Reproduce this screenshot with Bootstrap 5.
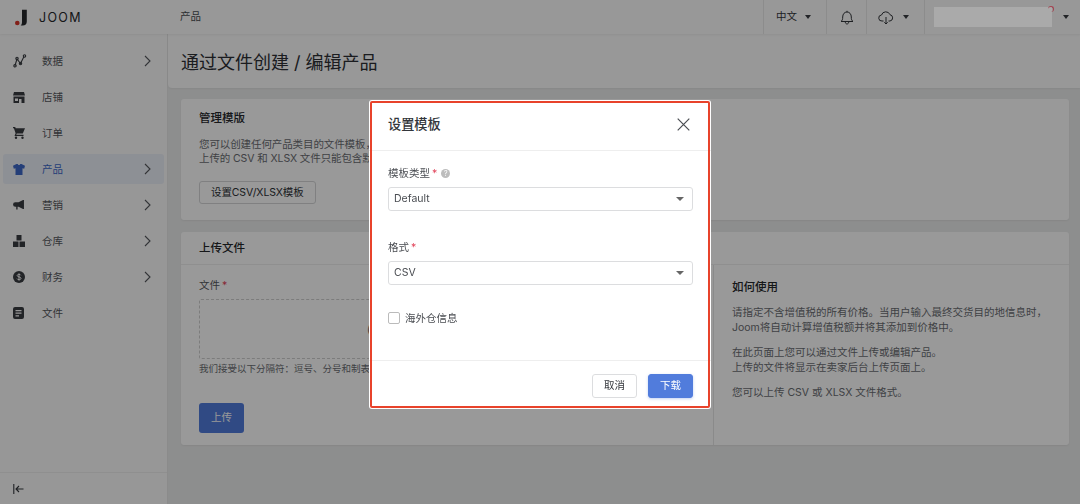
<!DOCTYPE html>
<html lang="zh">
<head>
<meta charset="utf-8">
<title>Joom</title>
<link href="https://cdn.jsdelivr.net/npm/bootstrap@5.3.0/dist/css/bootstrap.min.css" rel="stylesheet">
<style>
html,body{height:504px;overflow:hidden}
body{font-family:"Inter","Noto Sans CJK SC",sans-serif;font-size:10.5px;line-height:15px;color:#55585d;background:#eceded}
.shell{height:504px;overflow:hidden}
.topbar{height:34px;background:#fdfdfd;box-shadow:0 1px 2px rgba(0,0,0,.06);position:relative}
.brand{width:176px;padding-left:15px;gap:11px}
.brand-name{font-size:12.5px;font-weight:400;letter-spacing:1.3px;color:#25272b}
.crumb{margin-top:-2px;color:#4a4d52}
.topcell{height:34px;border-left:1px solid #eaeaea;color:#33363b}
.cell-lang{width:63px;gap:8px;padding-left:12px;padding-bottom:1px}
.cell-bell{width:40px;justify-content:center}
.cell-cloud{width:58px;padding-left:11px;gap:9px}
.cell-user{width:156px;padding-left:9px;gap:3px}
.userbox{width:118px;height:20px;background:#aaa;position:relative;z-index:1060;margin-top:-1px}
.userdot{position:absolute;right:-2px;top:-1px;width:6px;height:6px;border-radius:50%;border-top:1.5px solid #a5404f;border-right:1.5px solid #a5404f}
.caret{width:0;height:0;border-left:3.5px solid transparent;border-right:3.5px solid transparent;border-top:4px solid #3a3d42}
.sidecol{width:168px;height:470px;background:#fcfcfc;border-right:1px solid #e8e8e8}
.side{padding-top:12px;height:438px}
.sideitem{height:30px;margin:0 3px 6px;padding-left:10px;border-radius:3px;color:#55585d}
.sideitem.on{background:#ecf0f8;color:#3d68c8}
.sideicon{width:29px;display:flex}
.sidelabel{flex:1}
.chev{margin-right:13px}
.collapsebar{border-top:1px solid #efefef;height:32px;padding-left:13px}
.mainarea{flex:1;min-width:0}
.titlebar{height:54px;background:#fdfdfd;border-bottom-left-radius:4px;padding:2px 0 0 13px;font-size:18px;line-height:54px;color:#2d3035;box-shadow:0 1px 2px rgba(0,0,0,.05)}
.cards{padding:11px 11px 0 13px}
.panel{background:#fff;border-radius:3px;box-shadow:0 1px 2px rgba(0,0,0,.06)}
.panel-a{height:121px;padding:11px 18px 0;margin-bottom:12px}
.panel-b{height:213px}
.ptitle{font-size:11.5px;font-weight:500;color:#25272b;line-height:16px}
.panel-a p{margin:12px 0 15px;white-space:nowrap;color:#6a6d72;letter-spacing:-.1px;line-height:14px}
.btn-plain{font-size:10.5px;line-height:15px;padding:3px 11px;border:1px solid #d5d6d8;border-radius:3px;color:#2d3035;background:#fff;letter-spacing:-.1px}
.phead{height:33px;padding:8px 18px;border-bottom:1px solid #eee}
.upl{width:533px;padding:13px 18px 0;border-right:1px solid #e6e6e6;height:180px}
.req{color:#e2455b;margin-left:2px}
.drop{height:60px;margin-top:6px;width:496px;border:1px dashed #cfcfcf;border-radius:2px;color:#55585d;padding-left:167px;line-height:60px;white-space:nowrap;overflow:hidden}
.hint{margin-top:2px;color:#6a6d72;font-size:9.5px;white-space:nowrap}
.btn-up{margin-top:27px;width:45px;height:30px;padding:0;font-size:10.5px;border-radius:3px;background:#517cdc;border:0;color:#fff}
.howto{padding:10px 18px 0 18px;color:#6a6d72}
.howto .ptitle{margin-top:4px}
.howto p{margin:11px 0 0;line-height:14.6px;white-space:nowrap}
.shade{position:fixed;inset:0;background:rgba(0,0,0,.4);z-index:1050;padding-top:100px}
.sheet{width:342px;height:309px;margin-left:369px;border:0;border-radius:3px;background:#fff;outline:2px solid #e8432b;outline-offset:-3px;color:#4a4d52}
.sheet .modal-header{height:51px;padding:0 21px 0 19px;border-bottom:1px solid #eee;border-radius:0}
.sheet .modal-title{font-size:13.2px;font-weight:500;color:#33363b;margin-top:-2px}
.closer{background:none;border:0;padding:0;line-height:0;margin-top:-2px}
.sheet .modal-body{padding:15px 18px 0 19px;flex:none;height:209px}
.fld-label{line-height:15px;height:15px;margin-bottom:6px;display:flex;align-items:center}
.help{width:9px;height:9px;border-radius:50%;background:#bdbdbd;color:#fff;font-size:7px;line-height:9px;text-align:center;margin-left:4px}
.pick{height:24px;min-height:24px;padding:0 20px 0 5px;font-size:10.5px;line-height:22px;color:#4a4d52;border:1px solid #dcdddf;border-radius:3px;margin-bottom:29px;background-size:8px 4px;background-position:right 8px center;background-image:url("data:image/svg+xml,%3Csvg xmlns='http://www.w3.org/2000/svg' viewBox='0 0 8 4'%3E%3Cpath d='M0 0h8L4 4z' fill='%23666'/%3E%3C/svg%3E")}
.pick.last{margin-bottom:21px}
.tick{gap:5px;height:13px;margin:0}
.tick .form-check-input{width:12px;height:12px;margin:0;border:1.5px solid #bbb;border-radius:2px;float:none}
.tick label{line-height:13px}
.sheet .modal-footer{height:49px;padding:13px 18px 0 0;border-top:1px solid #eee;align-items:flex-start;justify-content:flex-end;gap:11px;flex-wrap:nowrap}
.sheet .modal-footer .btn{margin:0;width:45px;height:24px;padding:0;font-size:10.5px;line-height:22px;border-radius:3px}
.btn-no{background:#fff;border:1px solid #dcdddf;color:#33363b}
.btn-go{background:#517cdc;border:1px solid #517cdc;color:#fff;box-shadow:0 1px 3px rgba(81,124,220,.35)}
</style>
</head>
<body>
<div class="shell">
  <header class="topbar d-flex align-items-center">
    <div class="brand d-flex align-items-center">
      <svg width="13" height="17" viewBox="0 0 13 17"><circle cx="2.300" cy="14" r="2.300" fill="#d9362b"/><path d="M7 .8h4.800v11.700c0 2.600-1.500 4-4 4H5.700c1-.8 1.300-1.900 1.300-3.400z" fill="#25272b"/></svg>
      <span class="brand-name">JOOM</span>
    </div>
    <div class="crumb flex-grow-1 ps-1">产品</div>
    <div class="topcell cell-lang d-flex align-items-center"><span>中文</span><span class="caret"></span></div>
    <div class="topcell cell-bell d-flex align-items-center">
      <svg width="14" height="15" viewBox="0 0 14 15" fill="none" stroke="#33363b" stroke-width="1"><path d="M1 11.500c1.300-1 1.700-2 1.700-4.500 0-3 1.800-5 4.300-5s4.300 2 4.300 5c0 2.500.4 3.500 1.700 4.500z"/><path d="M5.300 12c0 1.200.8 2 1.700 2s1.700-.8 1.700-2M7 2V.8"/></svg>
    </div>
    <div class="topcell cell-cloud d-flex align-items-center">
      <svg width="16" height="15" viewBox="0 0 16 15" fill="none" stroke="#33363b" stroke-width="1"><path d="M5.500 11H4A3 3 0 0 1 3.500 5 4.500 4.500 0 0 1 12 4.700 3.200 3.200 0 0 1 12 11h-1.500"/><path d="M8 7v7M6.300 12.300 8 14l1.700-1.700"/></svg>
      <span class="caret"></span>
    </div>
    <div class="topcell cell-user d-flex align-items-center"><div class="userbox"><span class="userdot"></span></div><span class="caret ms-2"></span></div>
  </header>
  <div class="d-flex">
    <aside class="sidecol d-flex flex-column">
      <nav class="side">
        <div class="sideitem d-flex align-items-center"><span class="sideicon"><svg width="14" height="14" viewBox="0 0 14 14" fill="none" stroke="#3a3d42" stroke-width="1.100"><path d="M2 11.500 4 5l3.500 4.500L11 2.500"/><circle cx="2" cy="11.800" r="1.200"/><circle cx="4" cy="4.500" r="1.200"/><circle cx="7.500" cy="9.500" r="1.200"/><circle cx="11.500" cy="2" r="1.200"/></svg></span><span class="sidelabel">数据</span><svg class="chev" width="7" height="12" viewBox="0 0 7 12" fill="none" stroke="#55585d" stroke-width="1.100"><path d="m1 1 5 5-5 5"/></svg></div>
        <div class="sideitem d-flex align-items-center"><span class="sideicon"><svg width="12" height="11" viewBox="0 0 12 11" fill="#3a3d42"><path d="M1 0h10l1 3.500H0zM.5 4.500h11V11h-3V7h-2.500v4H.5zM2 6.500V9h3V6.500z" fill-rule="evenodd"/></svg></span><span class="sidelabel">店铺</span></div>
        <div class="sideitem d-flex align-items-center"><span class="sideicon"><svg width="12" height="12" viewBox="0 0 12 12" fill="#3a3d42"><path d="M0 0h2.200l.5 1.200H12L9.800 6.500H3.800L3.200 7.700H10.500V9H1.500L2.600 6.300.9 1.300H0z"/><circle cx="3" cy="10.800" r="1.200"/><circle cx="9.500" cy="10.800" r="1.200"/></svg></span><span class="sidelabel">订单</span></div>
        <div class="sideitem on d-flex align-items-center"><span class="sideicon"><svg width="12" height="11" viewBox="0 0 12 11" fill="#3d68c8"><path d="M3.500 0h1.300c.2.800.6 1.100 1.200 1.100S7 .8 7.200 0h1.300L12 1.800l-.8 3-1.700-.5V11h-7V4.300l-1.700.5-.8-3z"/></svg></span><span class="sidelabel">产品</span><svg class="chev" width="7" height="12" viewBox="0 0 7 12" fill="none" stroke="#55585d" stroke-width="1.100"><path d="m1 1 5 5-5 5"/></svg></div>
        <div class="sideitem d-flex align-items-center"><span class="sideicon"><svg width="11" height="10" viewBox="0 0 12 11" fill="#3a3d42"><path d="M11 0h1v10h-1L6 7.500H5v3H3.500v-3H2.500A2.500 2.500 0 0 1 2.500 2.500H6z"/></svg></span><span class="sidelabel">营销</span><svg class="chev" width="7" height="12" viewBox="0 0 7 12" fill="none" stroke="#55585d" stroke-width="1.100"><path d="m1 1 5 5-5 5"/></svg></div>
        <div class="sideitem d-flex align-items-center"><span class="sideicon"><svg width="12" height="12" viewBox="0 0 12 12" fill="#3a3d42"><path d="M3.500 0h5v5.500h-5zM0 6.500h5.500V12H0zM6.500 6.500H12V12H6.500z"/></svg></span><span class="sidelabel">仓库</span><svg class="chev" width="7" height="12" viewBox="0 0 7 12" fill="none" stroke="#55585d" stroke-width="1.100"><path d="m1 1 5 5-5 5"/></svg></div>
        <div class="sideitem d-flex align-items-center"><span class="sideicon"><svg width="12" height="12" viewBox="0 0 12 12"><circle cx="6" cy="6" r="6" fill="#3a3d42"/><path d="M7.800 4.300C7.500 3.600 6.800 3.300 6 3.300c-1 0-1.800.5-1.800 1.300C4.200 6.400 8 5.500 8 7.400c0 .8-.9 1.300-2 1.300-.9 0-1.700-.4-2-1.100M6 2.500v7" fill="none" stroke="#fcfcfc" stroke-width="1"/></svg></span><span class="sidelabel">财务</span><svg class="chev" width="7" height="12" viewBox="0 0 7 12" fill="none" stroke="#55585d" stroke-width="1.100"><path d="m1 1 5 5-5 5"/></svg></div>
        <div class="sideitem d-flex align-items-center"><span class="sideicon"><svg width="11" height="12" viewBox="0 0 11 12" fill="#3a3d42"><path d="M2 0h7a2 2 0 0 1 2 2v8a2 2 0 0 1-2 2H2a2 2 0 0 1-2-2V2a2 2 0 0 1 2-2zM2.500 3v1.200h6V3zm0 2.600v1.200h6V5.600zm0 2.600v1.200h3.500V8.200z" fill-rule="evenodd"/></svg></span><span class="sidelabel">文件</span></div>
      </nav>
      <div class="collapsebar d-flex align-items-center">
        <svg width="11" height="10" viewBox="0 0 11 10" fill="none" stroke="#33363b" stroke-width="1.100"><path d="M.8 0v10M10.500 5H3M6 2 3 5l3 3"/></svg>
      </div>
    </aside>
    <main class="mainarea">
      <div class="titlebar">通过文件创建 / 编辑产品</div>
      <div class="cards">
        <section class="panel panel-a">
          <div class="ptitle">管理模版</div>
          <p>您可以创建任何产品类目的文件模板，<br>上传的 CSV 和 XLSX 文件只能包含默</p>
          <button type="button" class="btn btn-plain">设置CSV/XLSX模板</button>
        </section>
        <section class="panel panel-b">
          <div class="phead ptitle">上传文件</div>
          <div class="d-flex">
            <div class="upl">
              <div>文件<span class="req">*</span></div>
              <div class="drop">(</div>
              <div class="hint">我们接受以下分隔符：逗号、分号和制表符</div>
              <button type="button" class="btn btn-up">上传</button>
            </div>
            <div class="howto">
              <div class="ptitle">如何使用</div>
              <p>请指定不含增值税的所有价格。当用户输入最终交货目的地信息时，<br>Joom将自动计算增值税额并将其添加到价格中。</p>
              <p>在此页面上您可以通过文件上传或编辑产品。<br>上传的文件将显示在卖家后台上传页面上。</p>
              <p>您可以上传 CSV 或 XLSX 文件格式。</p>
            </div>
          </div>
        </section>
      </div>
    </main>
  </div>
</div>
<div class="shade">
  <div class="modal-content sheet">
    <div class="modal-header">
      <h5 class="modal-title">设置模板</h5>
      <button type="button" class="closer" aria-label="关闭"><svg width="13" height="13" viewBox="0 0 13 13" stroke="#4a4d52" stroke-width="1.200"><path d="m.7.700 11.600 11.600M12.300.700.7 12.300"/></svg></button>
    </div>
    <div class="modal-body">
      <div class="fld-label">模板类型<span class="req">*</span><span class="help">?</span></div>
      <select class="form-select pick"><option>Default</option></select>
      <div class="fld-label">格式<span class="req">*</span></div>
      <select class="form-select pick last"><option>CSV</option></select>
      <div class="form-check d-flex align-items-center tick p-0">
        <input class="form-check-input" type="checkbox" id="wh">
        <label class="form-check-label" for="wh">海外仓信息</label>
      </div>
    </div>
    <div class="modal-footer">
      <button type="button" class="btn btn-no">取消</button>
      <button type="button" class="btn btn-go">下载</button>
    </div>
  </div>
</div>
</body>
</html>
